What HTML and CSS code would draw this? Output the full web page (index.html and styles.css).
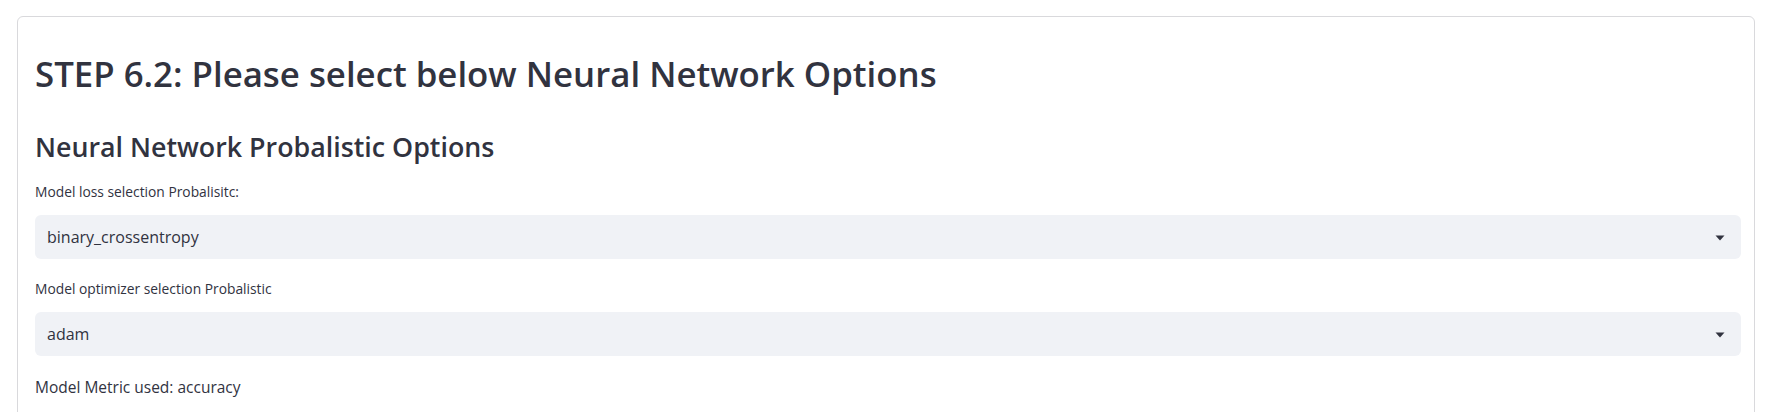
FILE: index.html
```html
<!DOCTYPE html>
<html lang="en">
<head>
<meta charset="utf-8">
<title>Neural Network Options</title>
<link rel="stylesheet" href="styles.css">
</head>
<body>
<div class="card">
  <h2 class="title">STEP 6.2: Please select below Neural Network Options</h2>
  <h3 class="subtitle">Neural Network Probalistic Options</h3>
  <div class="field">
    <label class="label">Model loss selection Probalisitc:</label>
    <div class="select">
      <span class="value">binary_crossentropy</span>
      <svg class="caret" width="10" height="6" viewBox="0 0 10 6"><path d="M0.5 0.5h9L5 5.5z" fill="#31333f"/></svg>
    </div>
  </div>
  <div class="field">
    <label class="label">Model optimizer selection Probalistic</label>
    <div class="select">
      <span class="value">adam</span>
      <svg class="caret" width="10" height="6" viewBox="0 0 10 6"><path d="M0.5 0.5h9L5 5.5z" fill="#31333f"/></svg>
    </div>
  </div>
  <p class="metric">Model Metric used: accuracy</p>
</div>
</body>
</html>
```
FILE: styles.css
```css
html, body {
  margin: 0;
  padding: 0;
  background: #ffffff;
  overflow: hidden;
}
body {
  font-family: "Open Sans", "Noto Sans", sans-serif;
  color: #31333f;
  padding: 16px 0 0 17px;
}
.card {
  box-sizing: border-box;
  width: 1738px;
  border: 1px solid #d9d9dc;
  border-radius: 6px;
  padding: 36px 13px 80px 17px;
}
.title {
  margin: 0;
  font-size: 34.8px;
  line-height: 42px;
  font-weight: 600;
  letter-spacing: 0;
}
.subtitle {
  margin: 35px 0 0;
  font-size: 26.8px;
  line-height: 34px;
  font-weight: 600;
}
.field {
  margin-top: 18px;
}
.field + .field {
  margin-top: 20px;
}
.label {
  display: block;
  font-size: 13.8px;
  line-height: 20px;
  margin-bottom: 13px;
}
.select {
  height: 44px;
  background: #f0f2f6;
  border-radius: 6px;
  display: flex;
  align-items: center;
  justify-content: space-between;
  padding: 0 16px 0 12px;
}
.value {
  font-size: 16px;
  line-height: 22px;
}
.caret {
  display: block;
  margin-top: 1px;
}
.metric {
  margin: 19px 0 0;
  font-size: 15.5px;
  line-height: 24px;
}
```
